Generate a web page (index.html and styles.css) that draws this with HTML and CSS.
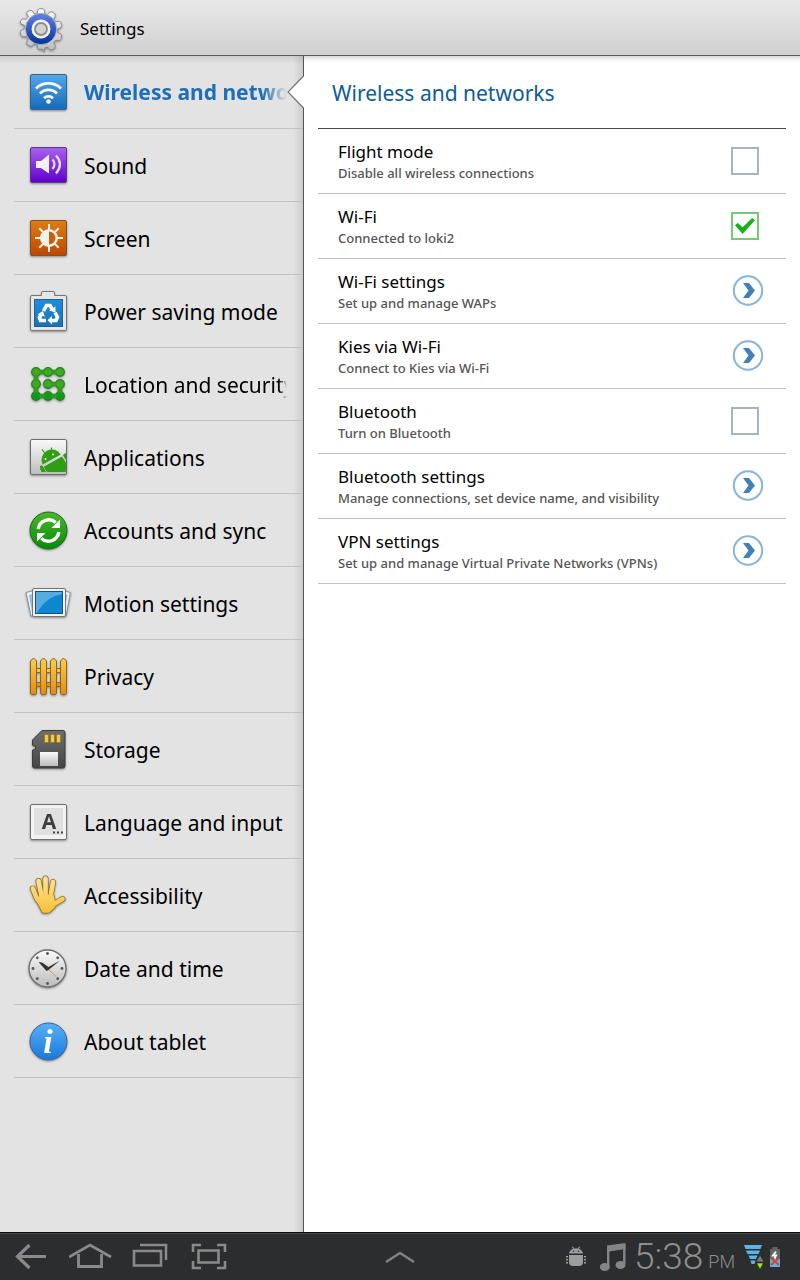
FILE: index.html
```html
<!DOCTYPE html>
<html lang="en">
<head>
<meta charset="utf-8">
<title>Settings</title>
<link rel="stylesheet" href="styles.css">
</head>
<body>
<svg class="defs" width="0" height="0" aria-hidden="true">
  <defs>
    <linearGradient id="silver" x1="0" y1="0" x2="0" y2="1"><stop offset="0" stop-color="#fafafa"/><stop offset="1" stop-color="#bcbcbc"/></linearGradient>
    <linearGradient id="royal" x1="0" y1="0" x2="0" y2="1"><stop offset="0" stop-color="#5a7be0"/><stop offset="1" stop-color="#0c3a9c"/></linearGradient>
    <linearGradient id="blue" x1="0" y1="0" x2="0" y2="1"><stop offset="0" stop-color="#56a6ea"/><stop offset="1" stop-color="#1569b8"/></linearGradient>
    <linearGradient id="azure" x1="0" y1="0" x2="0" y2="1"><stop offset="0" stop-color="#1f8fd8"/><stop offset="1" stop-color="#1672bd"/></linearGradient>
    <linearGradient id="purple" x1="0" y1="0" x2="0" y2="1"><stop offset="0" stop-color="#a862ee"/><stop offset="1" stop-color="#5f00cc"/></linearGradient>
    <linearGradient id="orange" x1="0" y1="0" x2="0" y2="1"><stop offset="0" stop-color="#de7c14"/><stop offset="1" stop-color="#b94a02"/></linearGradient>
    <linearGradient id="green" x1="0" y1="0" x2="0" y2="1"><stop offset="0" stop-color="#4bb52a"/><stop offset="1" stop-color="#068c08"/></linearGradient>
    <linearGradient id="gold" x1="0" y1="0" x2="0" y2="1"><stop offset="0" stop-color="#fad04a"/><stop offset="1" stop-color="#e58a12"/></linearGradient>
    <linearGradient id="skin" gradientUnits="userSpaceOnUse" x1="0" y1="5" x2="0" y2="43"><stop offset="0" stop-color="#fce6a0"/><stop offset="1" stop-color="#f9bd2f"/></linearGradient>
    <linearGradient id="info" x1="0" y1="0" x2="0" y2="1"><stop offset="0" stop-color="#5ab0f5"/><stop offset="1" stop-color="#1878dc"/></linearGradient>
    <linearGradient id="dark" x1="0" y1="0" x2="0" y2="1"><stop offset="0" stop-color="#6e6e6e"/><stop offset="1" stop-color="#454545"/></linearGradient>
  </defs>
</svg>

<header class="topbar">
  <svg class="icon" viewBox="-2 -2 52 52" aria-hidden="true">
    <path d="M20.500 3.500 22 2h4l1.500 1.500.5 4 3 1 3-3h2l3 2 .5 2.500-2 3 2.500 3 4-.5 1.500 1.500 1 3.500-1 2-3.500 1.500v4l3.500 1.500 1 2-1 3.500-1.500 1.500-4-.5-2.500 3 2 3-.5 2.500-3 2h-2l-3-3-3 1-.5 4L26 46h-4l-1.500-1.500-.5-4-3-1-3 3h-2l-3-2-.5-2.500 2-3-2.500-3-4 .5L2.500 31l-1-3.500 1-2L6 24v-4l-3.500-1.500-1-2 1-2 1.500-1.500 4 .5 2.500-3-2-3L9 5.500l3-1.500h2l3 4 3-1z" fill="url(#silver)" stroke="#8c8c8c" stroke-linejoin="round"/>
    <circle cx="24" cy="24" r="13.500" fill="none" stroke="url(#royal)" stroke-width="6.500"/>
    <circle cx="24" cy="24" r="17" fill="none" stroke="#a5abc0" stroke-width="1"/>
    <circle cx="24" cy="24" r="10" fill="#f2f2f2"/>
    <circle cx="24" cy="24" r="6.500" fill="#d2d2d2" stroke="#8d8d8d" stroke-width="2"/>
  </svg>
  <h1 class="topbar-title">Settings</h1>
</header>

<div class="panes">
  <nav class="sidebar" aria-label="Settings categories">
    <a class="item item-current" href="#wireless" aria-current="page">
      <svg class="icon" viewBox="0 0 48 48" aria-hidden="true"><rect x="6.500" y="6.500" width="36" height="35" rx="1.500" fill="url(#blue)" stroke="#37678f"/>
        <g fill="none" stroke="#f4f8fc" stroke-width="2.800"><path d="M12 20.500a18 18 0 0 1 25 0"/><path d="M16 25.500a12 12 0 0 1 17 0"/><path d="M20 30.200a6.500 6.500 0 0 1 9 0"/></g><circle cx="24.500" cy="33.500" r="2.300" fill="#f4f8fc"/></svg>
      <span class="label fade">Wireless and networks</span>
    </a>
    <a class="item" href="#sound">
      <svg class="icon" viewBox="0 0 48 48" aria-hidden="true"><rect x="6.500" y="6.500" width="36" height="35" rx="1.500" fill="url(#purple)" stroke="#5c378c"/>
        <path d="M12 20h5l8-6.500v19L17 27h-5z" fill="#f0f0f0"/><path d="M28.500 18.500q4 4.500 0 9.500M32 14.500q8 8.500 0 18" fill="none" stroke="#e8dcf8" stroke-width="2.200"/></svg>
      <span class="label">Sound</span>
    </a>
    <a class="item" href="#screen">
      <svg class="icon" viewBox="0 0 48 48" aria-hidden="true"><rect x="6.500" y="6.500" width="36" height="35" rx="1.500" fill="url(#orange)" stroke="#85501f"/>
        <g stroke="#f4f0ea" stroke-width="2"><path d="M25 10v28M11 24h28M15.300 14.300l19.400 19.400M34.700 14.300 15.300 33.700"/></g><circle cx="25" cy="24" r="9" fill="#f4f0ea"/><path d="M25 17.500a6.500 6.500 0 0 1 0 13z" fill="#c4600a"/></svg>
      <span class="label">Screen</span>
    </a>
    <a class="item" href="#power">
      <svg class="icon" viewBox="0 0 48 48" aria-hidden="true"><path d="M8 8.500h9.500V6q0-1.500 1.500-1.500h10q1.500 0 1.500 1.500v2.500H41q1.500 0 1.500 1.500v32q0 1.500-1.500 1.500H8q-1.500 0-1.500-1.500V10q0-1.500 1.500-1.500z" fill="#e6e6e6" stroke="#777"/><rect x="10.500" y="12.500" width="28" height="27" fill="url(#azure)" stroke="#28608e"/>
        <g fill="none" stroke="#fff" stroke-width="3.600"><path d="M19.500 24l3-5.500h3.500l2 3.500M31 25.500l2.500 4.500-1.500 3.500h-4.500M22 33.500h-5.500l-1-3 2-3.500"/></g><g fill="#fff"><path d="M31.500 19.500v6l-6.500-2zM28 29v8.500l-4.500-4.200zM13.500 27.500l5.500-3.500 1.800 5.500z"/></g></svg>
      <span class="label">Power saving mode</span>
    </a>
    <a class="item" href="#location">
      <svg class="icon" viewBox="0 0 48 48" aria-hidden="true"><g fill="url(#green)" stroke="#2a7d1e" stroke-width="1.400"><circle cx="12" cy="12" r="4.200"/><circle cx="24" cy="12" r="4.200"/><circle cx="36" cy="12" r="4.200"/><circle cx="12" cy="24" r="4.200"/><circle cx="24" cy="24" r="4.200"/><circle cx="36" cy="24" r="4.200"/><circle cx="12" cy="36" r="4.200"/><circle cx="24" cy="36" r="4.200"/><circle cx="36" cy="36" r="4.200"/></g>
        <path d="M36 12H12v24h24V24H24" fill="none" stroke="#2c8c1e" stroke-width="4.600"/><path d="M36 12H12v24h24V24H24" fill="none" stroke="#30a01c" stroke-width="3.200"/><g fill="#3bab22"><circle cx="12" cy="12" r="3.600"/><circle cx="24" cy="12" r="3.600"/><circle cx="36" cy="12" r="3.600"/><circle cx="12" cy="24" r="3.600"/><circle cx="24" cy="24" r="3.600"/><circle cx="36" cy="24" r="3.600"/></g><g fill="#0f9a1a"><circle cx="12" cy="36" r="3.600"/><circle cx="24" cy="36" r="3.600"/><circle cx="36" cy="36" r="3.600"/></g></svg>
      <span class="label fade-short">Location and security</span>
    </a>
    <a class="item" href="#applications">
      <svg class="icon" viewBox="0 0 48 48" aria-hidden="true"><rect x="6.500" y="6.500" width="36" height="35" rx="1.500" fill="url(#silver)" stroke="#6c6c6c"/>
        <g fill="#2f9e12"><path d="M18.700 31.500A10.300 10.300 0 0 1 36.700 21.500z"/><path d="M19.800 33.800 38 23.500l4 6V38q0 1-1 1H24q-1.500 0-2.500-2z"/><path d="M16 33q2-1.500 3.500 1L22 39h-4.500q-2-3-1.500-6zM39 22.500q.5-2 3-2.500v7z"/><path d="M18 16.500l3 4M27.500 14.500v4" stroke="#2f9e12" stroke-width="1.200"/></g><circle cx="21.500" cy="26" r="1" fill="#fff"/><circle cx="29" cy="21.500" r="1" fill="#fff"/></svg>
      <span class="label">Applications</span>
    </a>
    <a class="item" href="#accounts">
      <svg class="icon" viewBox="0 0 48 48" aria-hidden="true"><circle cx="24.500" cy="24.500" r="18.500" fill="url(#green)" stroke="#1d6a18"/>
        <g fill="none" stroke="#fff" stroke-width="3.400"><path d="M14.200 23a10.600 10.600 0 0 1 17.500-6.500M34.800 26a10.600 10.600 0 0 1-17.500 6.500"/></g><path d="M36 13.500V22h-8.500zM13 35.500V27h8.500z" fill="#fff"/></svg>
      <span class="label">Accounts and sync</span>
    </a>
    <a class="item" href="#motion">
      <svg class="icon" viewBox="0 0 48 48" aria-hidden="true"><g stroke="#8b9298" fill="#eee"><path d="M2 13.500 12 11v25l-5 1zM46.500 13.500 37 11v25l5 1z"/></g><path d="M5 16l4-1v17l-1 1zM43.500 16l-3-1v17z" fill="#8fc0e2"/><rect x="8.500" y="9.500" width="33" height="28" rx="1.500" fill="#f2f2f2" stroke="#777"/><rect x="11.500" y="12.500" width="27" height="22" fill="#0f86d0" stroke="#1a4f78"/><path d="M12 13h26v2Q22 18 13 34h-1z" fill="#54acdf"/></svg>
      <span class="label">Motion settings</span>
    </a>
    <a class="item" href="#privacy">
      <svg class="icon" viewBox="0 0 48 48" aria-hidden="true"><g fill="url(#gold)" stroke="#8f6620" stroke-width="1"><path d="M8 16.500h33v4H8zM8 30.500h33v4H8z"/><path d="M6.500 9l3-3 3 3v32l-1 1.500h-4l-1-1.500zM16.500 9l3-3 3 3v32l-1 1.500h-4l-1-1.500zM26.500 9l3-3 3 3v32l-1 1.500h-4l-1-1.500zM36.500 9l3-3 3 3v32l-1 1.500h-4l-1-1.500z"/></g></svg>
      <span class="label">Privacy</span>
    </a>
    <a class="item" href="#storage">
      <svg class="icon" viewBox="0 0 48 48" aria-hidden="true"><path d="M18 5.500h21q2 0 2 2V41q0 2-2 2H10.500q-2 0-2-2V25l3-1v-3h-2l-1-1v-5z" fill="url(#dark)" stroke="#3b3b3b"/><g fill="#f3c843" stroke="#8c7427" stroke-width=".6"><path d="M20.500 9.500h4v8h-4zM26.500 9.500h4v8h-4zM32.500 9.500h4v8h-4z"/></g><rect x="16" y="27" width="18" height="14" fill="url(#silver)"/></svg>
      <span class="label">Storage</span>
    </a>
    <a class="item" href="#language">
      <svg class="icon" viewBox="0 0 48 48" aria-hidden="true"><rect x="6.500" y="6.500" width="36" height="35" rx="1.500" fill="#f2f2f2" stroke="#707070"/><rect x="10" y="10" width="29" height="27" fill="#e0e0e0"/><text class="key-letter" x="25" y="31" text-anchor="middle">A</text><path d="M29 34.500h2M33 34.500h2M37 34.500h2" stroke="#444" stroke-width="2"/></svg>
      <span class="label">Language and input</span>
    </a>
    <a class="item" href="#accessibility">
      <svg class="icon" viewBox="0 0 48 48" aria-hidden="true"><g fill="none" stroke-linecap="round" stroke-linejoin="round">
        <g stroke="#8c6d2c" stroke-width="6"><path d="M8.800 17.500 13 28M14.500 10 17.500 25M21.500 7.500V25M29 11 26.500 26M38.500 28 30 33"/><path d="M14 28l14-2 1 9-5 4.500h-4z" fill="#8c6d2c"/></g>
        <g stroke="url(#skin)" stroke-width="4.600"><path d="M8.800 17.500 13 28M14.500 10 17.500 25M21.500 7.500 21.600 25M29 11 26.500 26M38.500 28 30 33"/><path d="M14 28l14-2 1 9-5 4.500h-4z" fill="url(#skin)"/></g></g></svg>
      <span class="label">Accessibility</span>
    </a>
    <a class="item" href="#date">
      <svg class="icon" viewBox="0 0 48 48" aria-hidden="true"><circle cx="23.500" cy="24.500" r="18.500" fill="url(#silver)" stroke="#6f6f6f" stroke-width="1.300"/><g fill="#555"><circle cx="23.500" cy="9.500" r="1.400"/><circle cx="23.500" cy="39.500" r="1.400"/><circle cx="9" cy="24.500" r="1.400"/><circle cx="38" cy="24.500" r="1.400"/><circle cx="13.300" cy="13.800" r="1.400"/><circle cx="33.700" cy="13.800" r="1.400"/><circle cx="13.300" cy="34.700" r="1.400"/><circle cx="33.700" cy="34.700" r="1.400"/></g><path d="M23.500 24.500l8.500 8" stroke="#d9898a"/><path d="M14.500 18l3.500.5 6.500 4.500L36 16.500l-11.500 9.500-2 1z" fill="#333"/></svg>
      <span class="label">Date and time</span>
    </a>
    <a class="item" href="#about">
      <svg class="icon" viewBox="0 0 48 48" aria-hidden="true"><circle cx="24.500" cy="24.500" r="18.500" fill="url(#info)" stroke="#3a6490"/><text class="info-letter" x="24" y="36" text-anchor="middle">i</text></svg>
      <span class="label">About tablet</span>
    </a>
    <svg class="notch" viewBox="0 0 17 34" aria-hidden="true"><path d="M17 1 1 17l16 16z" fill="#fff"/><path d="M16.500 1 1 17l15.500 16" fill="none" stroke="#777" stroke-width="1.200"/></svg>
  </nav>

  <main class="content">
    <h2 class="heading">Wireless and networks</h2>
    <label class="row" for="flight"><span class="texts"><span class="name">Flight mode</span><span class="note">Disable all wireless connections</span></span><input class="check" type="checkbox" id="flight"></label>
    <label class="row" for="wifi"><span class="texts"><span class="name">Wi-Fi</span><span class="note">Connected to loki2</span></span><input class="check" type="checkbox" id="wifi" checked></label>
    <button class="row" type="button"><span class="texts"><span class="name">Wi-Fi settings</span><span class="note">Set up and manage WAPs</span></span><svg class="go" viewBox="0 0 32 32" aria-hidden="true"><circle cx="16" cy="15.500" r="14.200"/><path d="M11 8h6l6 7.500-6 7.500h-6l5.500-7.500z"/></svg></button>
    <button class="row" type="button"><span class="texts"><span class="name">Kies via Wi-Fi</span><span class="note">Connect to Kies via Wi-Fi</span></span><svg class="go" viewBox="0 0 32 32" aria-hidden="true"><circle cx="16" cy="15.500" r="14.200"/><path d="M11 8h6l6 7.500-6 7.500h-6l5.500-7.500z"/></svg></button>
    <label class="row" for="bluetooth"><span class="texts"><span class="name">Bluetooth</span><span class="note">Turn on Bluetooth</span></span><input class="check" type="checkbox" id="bluetooth"></label>
    <button class="row" type="button"><span class="texts"><span class="name">Bluetooth settings</span><span class="note">Manage connections, set device name, and visibility</span></span><svg class="go" viewBox="0 0 32 32" aria-hidden="true"><circle cx="16" cy="15.500" r="14.200"/><path d="M11 8h6l6 7.500-6 7.500h-6l5.500-7.500z"/></svg></button>
    <button class="row" type="button"><span class="texts"><span class="name">VPN settings</span><span class="note">Set up and manage Virtual Private Networks (VPNs)</span></span><svg class="go" viewBox="0 0 32 32" aria-hidden="true"><circle cx="16" cy="15.500" r="14.200"/><path d="M11 8h6l6 7.500-6 7.500h-6l5.500-7.500z"/></svg></button>
  </main>
</div>

<footer class="sysbar">
  <div class="keys">
    <button class="key" type="button" aria-label="Back"><svg class="key-icon" viewBox="0 0 44 32"><path d="M36 15.500H8M19.500 4 7.500 15.500l12 11.500" fill="none" stroke="#8a8a8a" stroke-width="3.200"/></svg></button>
    <button class="key" type="button" aria-label="Home"><svg class="key-icon" viewBox="0 0 44 32"><path d="M0 16 21 4l21 12M9.500 13v12.500h23V13" fill="none" stroke="#8a8a8a" stroke-width="2.800"/></svg></button>
    <button class="key" type="button" aria-label="Recent apps"><svg class="key-icon" viewBox="0 0 44 32"><path d="M6 10h27v14.500H6zM12 4h26v15" fill="none" stroke="#8a8a8a" stroke-width="2.600"/></svg></button>
    <button class="key" type="button" aria-label="Screen capture"><svg class="key-icon" viewBox="0 0 44 32"><path d="M11.500 9.500h20v12h-20zM6 11V4h8M30 4h8v7M6 20v7h8M30 27h8v-7" fill="none" stroke="#8a8a8a" stroke-width="2.600"/></svg></button>
  </div>
  <button class="key" type="button" aria-label="Mini apps"><svg class="key-icon" viewBox="0 0 44 32"><path d="M8 21 22 12l14 9" fill="none" stroke="#828282" stroke-width="2.400"/></svg></button>
  <div class="status">
    <svg class="robot" viewBox="0 0 22 22" aria-hidden="true"><g fill="#9c9e9e"><path d="M4 7.500Q5 3.500 8 3L7 1l1-.5L9 2.500h4L14 .500l1 .5-1 2q3 .5 4 4.500zM4 9h14v7q0 4-4 4H8q-4 0-4-4z"/><path d="M1 10h2v1.500H1zM1 13h2v1.500H1zM1 16h2v1.500H1zM19 10h2v1.500h-2zM19 13h2v1.500h-2zM19 16h2v1.500h-2z"/></g><circle cx="8.500" cy="5.300" r=".8" fill="#2c2d2f"/><circle cx="13.500" cy="5.300" r=".8" fill="#2c2d2f"/></svg>
    <svg class="music" viewBox="0 0 27 30" aria-hidden="true"><path d="M8 3.500 26.500 1v6L10 9.500z" fill="#858585"/><path d="M9.200 4v20M25.300 3v19" stroke="#858585" stroke-width="2.400"/><ellipse cx="5.800" cy="25" rx="5" ry="4" fill="#858585"/><ellipse cx="21.500" cy="23" rx="5" ry="4" fill="#858585"/></svg>
    <time class="clock" datetime="17:38">5:38</time><span class="ampm">PM</span>
    <svg class="signal" viewBox="0 0 22 26" aria-hidden="true"><path d="M1 1h18l-1.500 4h-15zM3 6.500h14l-1.500 3.500H4.500zM5.500 11.500h9L13 15H7zM7.500 16.500h5L11.500 20h-3z" fill="#5bb4e2"/><path d="M17 11.500l3.500 6h-7z" fill="#777"/><path d="M13.500 19h7L17 25.500z" fill="#a6e612" stroke="#1c1c1c" stroke-width=".6"/></svg>
    <svg class="battery" viewBox="0 0 12 22" aria-hidden="true"><path d="M1 3h2.500V1h5v2H11v18H1z" fill="#5f6365"/><path d="M1 13h10v8H1z" fill="#5bb4e2"/><path d="M7 5.500 4 9.500h3L5.500 12.500" fill="none" stroke="#fff" stroke-width="2"/><path d="M2 12l8 7M10 12l-8 7" stroke="#d9432f" stroke-width="2"/></svg>
  </div>
</footer>
</body>
</html>
```
FILE: styles.css
```css
* {
  box-sizing: border-box;
}

body {
  margin: 0;
  min-height: 100vh;
  display: grid;
  grid-template-rows: auto 1fr auto;
  font-family: "Noto Sans", "Open Sans", sans-serif;
  color: #000;
  background: #fff;
}

.defs {
  position: absolute;
}

.icon {
  width: 48px;
  height: 48px;
  flex: none;
  overflow: visible;
  filter: drop-shadow(0 1px 1px rgba(0, 0, 0, 0.4));
}

/* Top bar */

.topbar {
  display: flex;
  align-items: center;
  gap: 15px;
  height: 56px;
  padding: 2px 17px 0;
  background: linear-gradient(#e9e9e9, #d0d0d0);
  border-bottom: 1px solid #5c5c5c;
}

.topbar-title {
  margin: 0;
  font-size: 17px;
  font-weight: 400;
}

/* Panes */

.panes {
  display: grid;
  grid-template-columns: 38% 1fr;
  box-shadow: inset 0 6px 5px -4px rgba(0, 0, 0, 0.2);
}

.sidebar {
  position: relative;
  padding-left: 14px;
  border-right: 1px solid #555;
  background: linear-gradient(to right, transparent calc(100% - 10px), rgba(0, 0, 0, 0.1)), linear-gradient(#cfcfcf, #e3e3e3 8px);
}

.item {
  display: flex;
  align-items: center;
  gap: 12px;
  height: 73px;
  padding: 0 16px 0 10px;
  border-bottom: 1px solid #c2c2c2;
  color: #000;
  font-size: 21px;
  text-decoration: none;
}

.item-current {
  color: #1c6fb8;
  font-weight: 700;
}

.label {
  flex: 1;
  min-width: 0;
  padding-top: 2px;
  overflow: hidden;
  white-space: nowrap;
}

.item-current .label {
  padding-top: 0;
}

.fade {
  mask-image: linear-gradient(to right, #000 calc(100% - 24px), transparent);
}

.fade-short {
  mask-image: linear-gradient(to right, #000 calc(100% - 8px), transparent);
}

.notch {
  position: absolute;
  top: 19px;
  right: -1px;
  width: 17px;
  height: 34px;
}

.key-letter {
  font: 700 21px "Open Sans", sans-serif;
  fill: #3c3c3c;
}

.info-letter {
  font: italic 700 34px "Liberation Serif", serif;
  fill: #fff;
}

/* Content */

.content {
  padding: 0 14px;
}

.heading {
  display: flex;
  align-items: center;
  height: 73px;
  margin: 0;
  padding: 2px 14px 0;
  border-bottom: 1px solid #4a4a4a;
  color: #0b5c98;
  font-size: 21px;
  font-weight: 400;
}

.row {
  display: flex;
  align-items: center;
  justify-content: space-between;
  width: 100%;
  height: 65px;
  padding: 0 22px 0 20px;
  border: 0;
  border-bottom: 1px solid #c2c2c2;
  background: none;
  color: inherit;
  font: inherit;
  text-align: left;
}

.texts {
  display: grid;
}

.name {
  font-size: 17px;
  line-height: 24px;
}

.note {
  color: #555;
  font-size: 13px;
  font-weight: 500;
  line-height: 18px;
}

.check {
  appearance: none;
  display: grid;
  place-items: center;
  width: 28px;
  height: 28px;
  margin: 0 5px 0 0;
  border: 2px solid #a4b4c2;
  background: #fff;
}

.check:checked {
  border-color: #78c878;
}

.check:checked::before {
  content: "";
  width: 20px;
  height: 16px;
  background: #14b414;
  clip-path: polygon(0 46%, 14% 32%, 38% 58%, 86% 0, 100% 14%, 38% 100%);
}

.go {
  width: 32px;
  height: 32px;
}

.go circle {
  fill: none;
  stroke: #86b5dc;
  stroke-width: 2;
}

.go path {
  fill: #4180b8;
}

/* System bar */

.sysbar {
  display: grid;
  grid-template-columns: 1fr auto 1fr;
  align-items: center;
  height: 48px;
  border-top: 1px solid #0c0c0e;
  background: #2c2d2f;
  box-shadow: inset 0 1px #4a4b4e;
}

.keys {
  display: flex;
  gap: 15px;
  padding-left: 10px;
}

.key {
  display: flex;
  padding: 0;
  border: 0;
  background: none;
}

.key-icon {
  width: 44px;
  height: 32px;
}

.status {
  display: flex;
  align-items: center;
  justify-content: flex-end;
  padding-right: 19px;
  color: #8e8e8e;
  font-family: Roboto, "Liberation Sans", sans-serif;
}

.robot {
  width: 22px;
  height: 22px;
  margin-right: 12px;
}

.music {
  width: 27px;
  height: 30px;
  margin-right: 8px;
}

.clock {
  font-size: 37px;
  font-weight: 300;
  line-height: 46px;
}

.ampm {
  margin: 10px 8px 0 5px;
  font-size: 18px;
  font-weight: 300;
}

.signal {
  width: 22px;
  height: 26px;
  margin-right: 4px;
}

.battery {
  width: 12px;
  height: 22px;
}
```
